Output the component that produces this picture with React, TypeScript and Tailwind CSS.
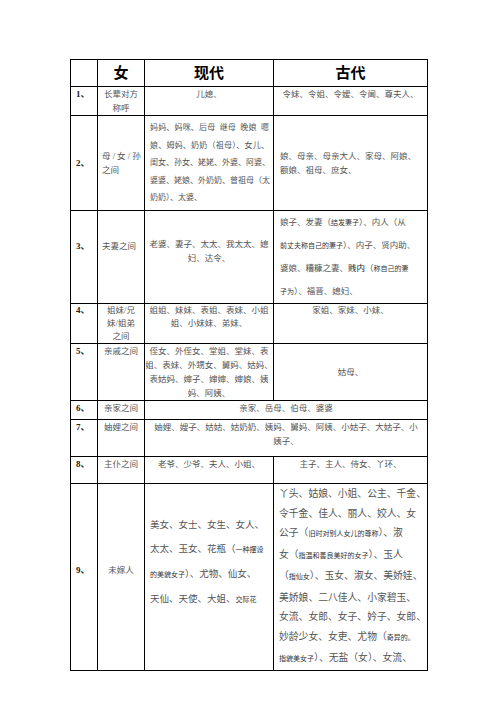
import React from "react";

const serif = { fontFamily: '"Liberation Serif", "Noto Sans CJK SC", serif' };

function S({ children }: { children: React.ReactNode }) {
  return <span className="text-[7px] text-[#333]">{children}</span>;
}

function Lines({
  lines,
  className = "",
  justify = false,
}: {
  lines: React.ReactNode[];
  className?: string;
  justify?: boolean;
}) {
  return (
    <div className={className}>
      {lines.map((l, i) => (
        <div
          key={i}
          className={
            justify && i < lines.length - 1
              ? "whitespace-pre text-justify [text-align-last:justify]"
              : "whitespace-pre"
          }
        >
          {l}
        </div>
      ))}
    </div>
  );
}

const td = "border border-black p-0 overflow-hidden";
const num = "text-[9px] font-bold text-[#222] pl-[5px]";

export default function App() {
  return (
    <main className="min-h-[702px] w-[496px] bg-white" style={serif}>
      <div className="pt-[59px] pl-[70px]">
        <table className="w-[357px] table-fixed border-collapse border border-black text-[8.5px] text-[#555] leading-[14px]">
          <colgroup>
            <col className="w-[27px]" />
            <col className="w-[47px]" />
            <col className="w-[129px]" />
            <col className="w-[154px]" />
          </colgroup>
          <tbody>
            <tr className="h-[27px]">
              <td className={td}></td>
              <td className={`${td} text-center text-[15px] font-bold text-black`}>女</td>
              <td className={`${td} text-center text-[15px] font-bold text-black`}>现代</td>
              <td className={`${td} text-center text-[15px] font-bold text-black`}>古代</td>
            </tr>
            <tr className="h-[27px]">
              <td className={`${td} ${num} align-top`}>1、</td>
              <td className={`${td} align-top text-center`}>
                <Lines lines={["长辈对方", "称呼"]} />
              </td>
              <td className={`${td} align-top text-center`}>儿媳、</td>
              <td className={`${td} align-top text-center`}>令妹、令姐、令嫒、令阃、尊夫人、</td>
            </tr>
            <tr className="h-[95px]">
              <td className={`${td} ${num}`}>2、</td>
              <td className={`${td} pl-[4px]`}>
                <Lines lines={["母 / 女 / 孙", "之间"]} />
              </td>
              <td className={`${td} pl-[5px] pr-[4px] text-[8px] leading-[17.5px]`}>
                <Lines
                  justify
                  lines={[
                    "妈妈、妈咪、后母  继母  晚娘  嗯",
                    "娘、姆妈、奶奶（祖母）、女儿、",
                    "闺女、孙女、姥姥、外婆、阿婆、",
                    "婆婆、姥娘、外奶奶、曾祖母（太",
                    "奶奶）、太婆、",
                  ]}
                />
              </td>
              <td className={`${td} pl-[6px]`}>
                <Lines lines={["娘、母亲、母亲大人、家母、阿娘、", "额娘、祖母、庶女、"]} />
              </td>
            </tr>
            <tr className="h-[90px]">
              <td className={`${td} ${num} pb-[22px]`}>3、</td>
              <td className={`${td} pl-[4px] pb-[22px]`}>夫妻之间</td>
              <td className={`${td} text-center pb-[12px]`}>
                <Lines lines={["老婆、妻子、太太、我太太、媳", "妇、达令、"]} />
              </td>
              <td className={`${td} pl-[6px] leading-[22px]`}>
                <Lines
                  lines={[
                    <>娘子、发妻（<S>结发妻子</S>）、内人（从</>,
                    <><S>前丈夫称自己的妻子</S>）、内子、贤内助、</>,
                    <>婆娘、糟糠之妻、<span className="text-[#222]">贱内</span>（<S>称自己的妻</S></>,
                    <><S>子为</S>）、福晋、媳妇、</>,
                  ]}
                />
              </td>
            </tr>
            <tr className="h-[38px] leading-[13px]">
              <td className={`${td} ${num} align-top`}>4、</td>
              <td className={`${td} align-top text-center`}>
                <Lines lines={["姐妹/兄", "妹/姐弟", "之间"]} />
              </td>
              <td className={`${td} align-top text-center`}>
                <Lines lines={["姐姐、妹妹、表姐、表妹、小姐", "姐、小妹妹、弟妹、"]} />
              </td>
              <td className={`${td} align-top text-center`}>家姐、家妹、小妹、</td>
            </tr>
            <tr className="h-[54px]">
              <td className={`${td} ${num} align-top`}>5、</td>
              <td className={`${td} align-top text-center`}>亲戚之间</td>
              <td className={`${td} align-top text-center`}>
                <Lines
                  lines={[
                    "侄女、外侄女、堂姐、堂妹、表",
                    "姐、表妹、外甥女、舅妈、姑妈、",
                    "表姑妈、婶子、婶婶、婶娘、姨",
                    "妈、阿姨、",
                  ]}
                />
              </td>
              <td className={`${td} text-center`}>姑母、</td>
            </tr>
            <tr className="h-[19px]">
              <td className={`${td} ${num} align-top`}>6、</td>
              <td className={`${td} align-top text-center`}>亲家之间</td>
              <td className={`${td} align-top text-center`} colSpan={2}>
                亲家、岳母、伯母、婆婆
              </td>
            </tr>
            <tr className="h-[37px]">
              <td className={`${td} ${num} align-top`}>7、</td>
              <td className={`${td} align-top text-center`}>妯娌之间</td>
              <td className={`${td} align-top text-center`} colSpan={2}>
                <Lines
                  lines={["妯娌、嫂子、姑姑、姑奶奶、姨妈、舅妈、阿姨、小姑子、大姑子、小", "姨子、"]}
                />
              </td>
            </tr>
            <tr className="h-[27px]">
              <td className={`${td} ${num} align-top`}>8、</td>
              <td className={`${td} align-top text-center`}>主仆之间</td>
              <td className={`${td} align-top text-center`}>老爷、少爷、夫人、小姐、</td>
              <td className={`${td} align-top text-center`}>主子、主人、侍女、丫环、</td>
            </tr>
            <tr className="h-[180px]">
              <td className={`${td} ${num} pb-[14px]`}>9、</td>
              <td className={`${td} text-center pb-[14px]`}>未嫁人</td>
              <td className={`${td} pl-[5px] pb-[28px] text-[9.5px] leading-[24px]`}>
                <Lines
                  lines={[
                    "美女、女士、女生、女人、",
                    <>太太、玉女、花瓶（<S>一种摆设</S></>,
                    <><S>的美貌女子</S>）、尤物、仙女、</>,
                    <>天仙、天使、大姐、<S>交际花</S></>,
                  ]}
                />
              </td>
              <td className={`${td} pl-[5px] text-[9.8px] leading-[19.5px]`}>
                <Lines
                  lines={[
                    "丫头、姑娘、小姐、公主、千金、",
                    "令千金、佳人、丽人、姣人、女",
                    <>公子（<S>旧时对别人女儿的尊称</S>）、淑</>,
                    <>女（<S>指温和善良美好的女子</S>）、玉人</>,
                    <>（<S>指仙女</S>）、玉女、淑女、美娇娃、</>,
                    "美娇娘、二八佳人、小家碧玉、",
                    "女流、女郎、女子、妗子、女郎、",
                    <>妙龄少女、女吏、尤物（<S>奇异的。</S></>,
                    <><S>指貌美女子</S>）、无盐（女）、女流、</>,
                  ]}
                />
              </td>
            </tr>
          </tbody>
        </table>
      </div>
    </main>
  );
}
